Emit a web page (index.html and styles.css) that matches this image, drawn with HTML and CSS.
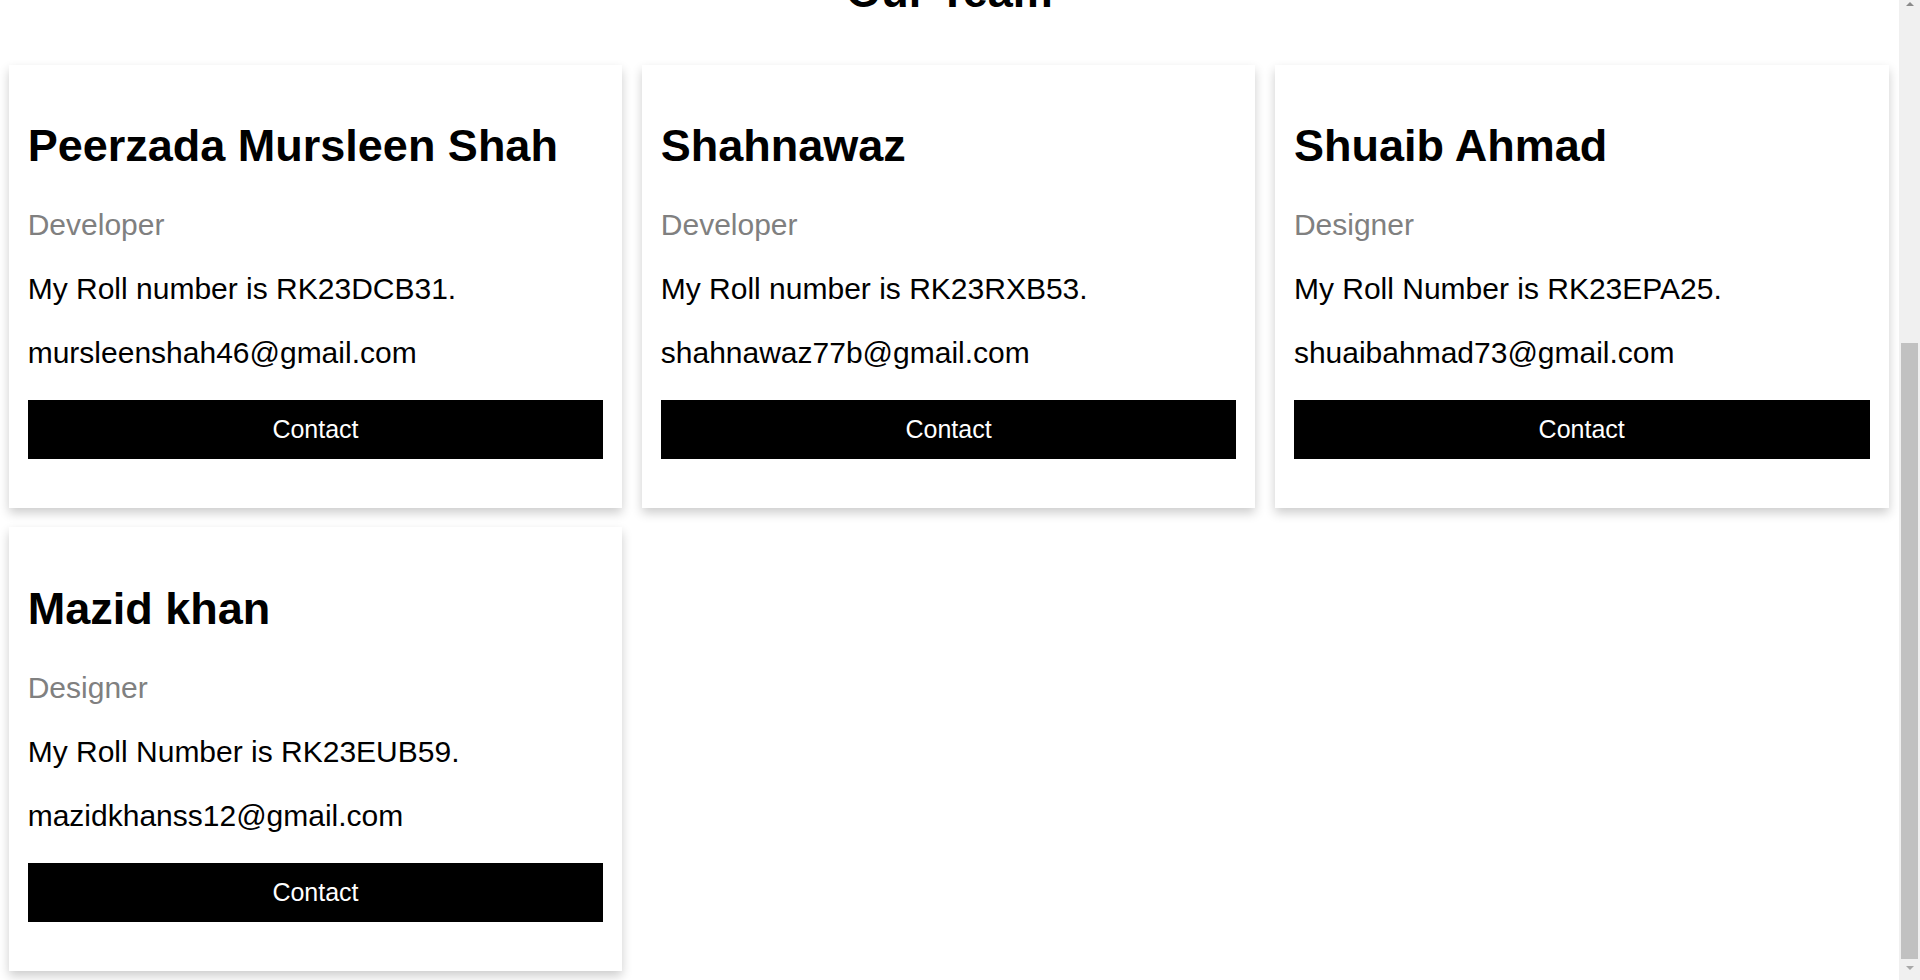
FILE: index.html
```html
<!DOCTYPE html>
<html lang="en">
<head>
<meta charset="utf-8">
<title>Our Team</title>
<link rel="stylesheet" href="styles.css">
</head>
<body>
<div class="window">
  <main class="viewport">
    <div class="page">
      <h2 class="team-title">Our Team</h2>
      <div class="team-grid">
        <div class="card">
          <div class="card-body">
            <h2 class="name">Peerzada Mursleen Shah</h2>
            <p class="role">Developer</p>
            <p>My Roll number is RK23DCB31.</p>
            <p>mursleenshah46@gmail.com</p>
            <p><button class="contact-btn">Contact</button></p>
          </div>
        </div>
        <div class="card">
          <div class="card-body">
            <h2 class="name">Shahnawaz</h2>
            <p class="role">Developer</p>
            <p>My Roll number is RK23RXB53.</p>
            <p>shahnawaz77b@gmail.com</p>
            <p><button class="contact-btn">Contact</button></p>
          </div>
        </div>
        <div class="card">
          <div class="card-body">
            <h2 class="name">Shuaib Ahmad</h2>
            <p class="role">Designer</p>
            <p>My Roll Number is RK23EPA25.</p>
            <p>shuaibahmad73@gmail.com</p>
            <p><button class="contact-btn">Contact</button></p>
          </div>
        </div>
        <div class="card">
          <div class="card-body">
            <h2 class="name">Mazid khan</h2>
            <p class="role">Designer</p>
            <p>My Roll Number is RK23EUB59.</p>
            <p>mazidkhanss12@gmail.com</p>
            <p><button class="contact-btn">Contact</button></p>
          </div>
        </div>
      </div>
    </div>
  </main>
  <div class="scrollbar" aria-hidden="true">
    <div class="sb-btn sb-btn-up"><span class="sb-arrow-up"></span></div>
    <div class="sb-track"><div class="sb-thumb"></div></div>
    <div class="sb-btn sb-btn-down"><span class="sb-arrow-down"></span></div>
  </div>
</div>
</body>
</html>
```

FILE: styles.css
```css
html {
  box-sizing: border-box;
}
*, *::before, *::after {
  box-sizing: inherit;
}

html, body {
  height: 100%;
  overflow: hidden;
}

body {
  margin: 0;
  background: #ffffff;
  color: #000000;
  font-family: "Liberation Sans", Arial, sans-serif;
}

.window {
  display: flex;
  height: 100vh;
  overflow: hidden;
}

/* page area, shown scrolled to its end */
.viewport {
  flex: 1;
  min-width: 0;
  display: flex;
  flex-direction: column;
  justify-content: flex-end;
  overflow: hidden;
}

.page {
  flex: none;
}

.team-title {
  margin: 0 0 46.9px;
  text-align: center;
  font-size: 45px;
  font-weight: bold;
}

.team-grid {
  display: grid;
  grid-template-columns: repeat(3, 1fr);
  column-gap: 19.5px;
  row-gap: 19px;
  padding: 0 10.5px 9.5px 8.7px;
}

.card {
  background: #ffffff;
  box-shadow: 0 5px 10px 0 rgba(0, 0, 0, 0.2);
}

.card-body {
  padding: 20px 19px 19px;
}

.card-body::after {
  content: "";
  display: table;
  clear: both;
}

.name {
  margin: 35.5px 0 36px;
  font-size: 45px;
  font-weight: bold;
}

.card-body p {
  margin: 30px 0;
  font-size: 30px;
}

.card-body .role {
  color: #808080;
}

.contact-btn {
  display: inline-block;
  width: 100%;
  padding: 15px;
  border: none;
  outline: 0;
  background: #000000;
  color: #ffffff;
  font-family: "Liberation Sans", Arial, sans-serif;
  font-size: 25px;
  text-align: center;
  cursor: pointer;
}

/* window scrollbar */
.scrollbar {
  flex: none;
  width: 21px;
  display: flex;
  flex-direction: column;
  background: #f0f0f0;
}

.sb-btn {
  flex: none;
  height: 21px;
  display: flex;
  justify-content: center;
}

.sb-btn-up {
  align-items: flex-start;
  padding-top: 2px;
}

.sb-btn-down {
  align-items: flex-start;
  padding-top: 7px;
}

.sb-arrow-up {
  width: 0;
  height: 0;
  border-left: 4.5px solid transparent;
  border-right: 4.5px solid transparent;
  border-bottom: 4.5px solid #8a8a8a;
}

.sb-arrow-down {
  width: 0;
  height: 0;
  border-left: 4.5px solid transparent;
  border-right: 4.5px solid transparent;
  border-top: 4.5px solid #a8a8a8;
}

.sb-track {
  flex: 1;
  display: flex;
  flex-direction: column;
  padding: 0 2px;
}

.sb-thumb {
  margin-top: auto;
  height: 616px;
  background: #c1c1c1;
}
```
